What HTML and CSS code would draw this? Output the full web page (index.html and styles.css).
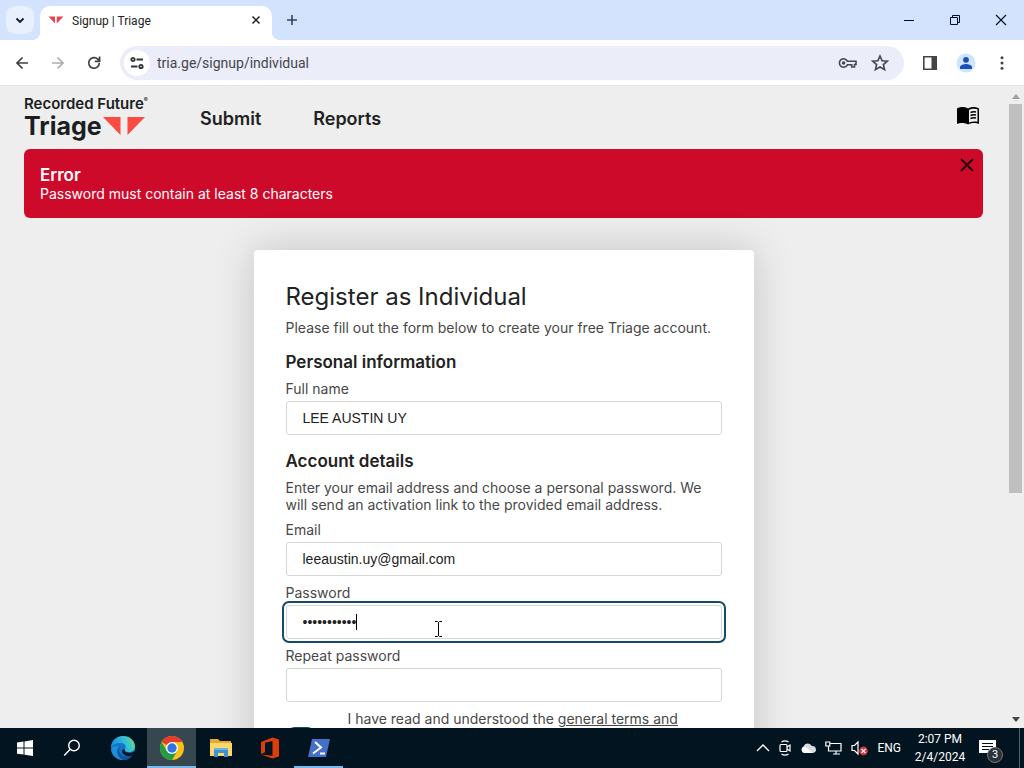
FILE: index.html
```html
<!DOCTYPE html>
<html lang="en">
<head>
<meta charset="utf-8">
<title>Signup | Triage</title>
<link rel="stylesheet" href="styles.css">
</head>
<body>
<div class="tabstrip">
  <button class="tab-search" aria-label="Search tabs"><svg width="12" height="12" viewBox="0 0 12 12"><path d="M2.500 4.500 6 8l3.500-3.500" fill="none" stroke="#111827" stroke-width="1.800"/></svg></button>
  <div class="tab">
    <svg width="16" height="16" viewBox="0 0 16 16"><path d="M.5 3.500h6.500v7zM15.500 3.500H8.700v7z" fill="#e2484d"/></svg>
    <span class="tab-title">Signup | Triage</span>
    <button class="plain" aria-label="Close tab"><svg width="16" height="16" viewBox="0 0 16 16"><path d="m4.500 3.500 7 7m0-7-7 7" stroke="#222" stroke-width="1.500"/></svg></button>
  </div>
  <button class="plain new-tab" aria-label="New tab"><svg width="16" height="16" viewBox="0 0 16 16"><path d="M8 3v10M3 8h10" stroke="#33425e" stroke-width="1.600"/></svg></button>
  <div class="window-controls">
    <button class="plain" aria-label="Minimize"><svg width="12" height="12" viewBox="0 0 12 12"><path d="M1 6.500h10" stroke="#000c30"/></svg></button>
    <button class="plain" aria-label="Restore"><svg width="12" height="12" viewBox="0 0 12 12"><path d="M1.500 3.500h7v7h-7zM3.500 3.500v-2h7v7h-2" fill="none" stroke="#000c30"/></svg></button>
    <button class="plain" aria-label="Close"><svg width="12" height="12" viewBox="0 0 12 12"><path d="m1 1 10 10M11 1 1 11" stroke="#000c30" stroke-width="1.100"/></svg></button>
  </div>
</div>

<div class="toolbar">
  <div class="history">
    <button class="plain" aria-label="Back"><svg width="16" height="16" viewBox="0 0 16 16"><path d="M14 8H3m5.500-5.500L3 8l5.500 5.500" fill="none" stroke="#3f4145" stroke-width="1.700"/></svg></button>
    <button class="plain" aria-label="Forward"><svg width="16" height="16" viewBox="0 0 16 16"><path d="M2 8h11M7.500 2.500 13 8l-5.500 5.500" fill="none" stroke="#aaacaf" stroke-width="1.700"/></svg></button>
    <button class="plain" aria-label="Reload"><svg width="16" height="16" viewBox="0 0 16 16"><path d="M13.300 8A5.300 5.300 0 1 1 11.800 4.200L13.500 6M13.600 1.500V6.300H8.800" fill="none" stroke="#3f4145" stroke-width="1.700"/></svg></button>
  </div>
  <div class="omnibox">
    <button class="site-info" aria-label="View site information"><svg width="16" height="16" viewBox="0 0 16 16" fill="none" stroke="#303236" stroke-width="1.800"><circle cx="4" cy="4.500" r="1.700"/><path d="M7.500 4.500H14M2 11.500h6.500"/><circle cx="12" cy="11.500" r="1.700"/></svg></button>
    <input class="address" type="text" aria-label="Address" value="tria.ge/signup/individual">
    <button class="plain" aria-label="Manage passwords"><svg width="20" height="16" viewBox="0 0 20 16" fill="none" stroke="#45474d" stroke-width="1.600"><path d="M10.400 6.200H19v3.300h-1.500V12h-2.800V9.800h-4.300a4.200 4.200 0 1 1 0-3.600z"/><circle cx="6.600" cy="8" r="1" fill="#45474d"/></svg></button>
    <button class="plain" aria-label="Bookmark"><svg width="18" height="18" viewBox="0 0 18 18"><path d="m9 2 2.100 4.700 5.200.5-3.900 3.400 1.200 5.100L9 13l-4.600 2.700 1.200-5.100-3.900-3.400 5.200-.5z" fill="none" stroke="#45474d" stroke-width="1.600"/></svg></button>
  </div>
  <button class="plain" aria-label="Side panel"><svg width="16" height="16" viewBox="0 0 16 16"><path d="M1.800 1.800h12.400v12.400H1.800z" fill="none" stroke="#444" stroke-width="1.600"/><path d="M9.500 1.500h5v13h-5z" fill="#444"/></svg></button>
  <button class="plain" aria-label="Profile"><svg width="20" height="20" viewBox="0 0 20 20"><circle cx="10" cy="10" r="9.500" fill="#cfe5fd"/><circle cx="10" cy="6.800" r="2.900" fill="#1a50b8"/><path d="M4 16v-2c0-2 4-3 6-3s6 1 6 3v2z" fill="#1a50b8"/></svg></button>
  <button class="plain" aria-label="Menu"><svg width="16" height="16" viewBox="0 0 16 16" fill="#444"><circle cx="8" cy="2.800" r="1.500"/><circle cx="8" cy="8" r="1.500"/><circle cx="8" cy="13.200" r="1.500"/></svg></button>
</div>

<div class="viewport">
  <div class="page">
    <header class="site-header">
      <a class="logo" href="#">
        <span class="logo-top">Recorded Future<span class="reg">®</span></span>
        <span class="logo-bottom">Triage<svg width="42" height="18" viewBox="0 0 42 18"><path d="M0 0h17.500v18zM42 0H24.500v18z" fill="#fb4b43"/></svg></span>
      </a>
      <nav class="nav"><a href="#">Submit</a><a href="#">Reports</a></nav>
      <a class="docs" href="#" aria-label="Documentation"><svg width="24" height="20" viewBox="0 0 24 20"><path d="M1 2.500C4 .5 9 .5 12 2.500c3-2 8-2 11 0V18c-3-1.500-8-1.500-11 .5C9 16.500 4 16.500 1 18z"/><path d="M13 4c2.500-1.600 6-1.600 8.500-.7v12.500c-2.500-.7-6-.4-8.500.7z" fill="#eee"/><path d="M14.500 6.500c1.700-.8 3.700-.9 5.500-.5M14.500 9.500c1.700-.8 3.700-.9 5.500-.5M14.500 12.500c1.700-.8 3.700-.9 5.500-.5" fill="none" stroke="#000" stroke-width="1.400"/></svg></a>
    </header>

    <div class="alert" role="alert">
      <div>
        <div class="alert-title">Error</div>
        <div class="alert-text">Password must contain at least 8 characters</div>
      </div>
      <button class="plain" aria-label="Dismiss"><svg width="16" height="16" viewBox="0 0 16 16"><path d="m2 2 12 12M14 2 2 14" stroke="#1c0508" stroke-width="2"/></svg></button>
    </div>

    <form class="card">
      <h1>Register as Individual</h1>
      <p>Please fill out the form below to create your free Triage account.</p>
      <h2>Personal information</h2>
      <div class="field">
        <label for="name">Full name</label>
        <input id="name" type="text" value="LEE AUSTIN UY">
      </div>
      <h2>Account details</h2>
      <p>Enter your email address and choose a personal password. We will send an activation link to the provided email address.</p>
      <div class="field">
        <label for="email">Email</label>
        <input id="email" type="email" value="leeaustin.uy@gmail.com">
      </div>
      <div class="field">
        <label for="password">Password</label>
        <div class="control">
          <input id="password" class="focused" type="password" value="abcdefghijk">
          <span class="caret"></span>
          <svg class="pointer" width="9" height="16" viewBox="0 0 9 16"><path d="M1 .5h2.500l1 1 1-1H8M4.500 1v14M1 15.500h2.500l1-1 1 1H8" fill="none" stroke="#000"/></svg>
        </div>
      </div>
      <div class="field">
        <label for="repeat">Repeat password</label>
        <input id="repeat" type="password">
      </div>
      <div class="terms">
        <input id="terms" type="checkbox">
        <div><label for="terms">I have read and understood the</label> <a href="#">general terms and</a></div>
      </div>
    </form>
  </div>
  <div class="scrollbar">
    <svg width="8" height="5" viewBox="0 0 8 5"><path d="M0 5 4 0l4 5z" fill="#a0a0a0"/></svg>
    <div class="track"><div class="thumb"></div></div>
    <svg width="8" height="5" viewBox="0 0 8 5"><path d="m0 0 4 5 4-5z" fill="#444"/></svg>
  </div>
</div>

<div class="taskbar">
  <button class="task" aria-label="Start"><svg width="18" height="18" viewBox="0 0 18 18" fill="#fff"><path d="M1 3.500 7.500 2.600v6H1zM8.500 2.400 17 1v7.600H8.500zM1 9.600h6.500v6L1 14.700zM8.500 9.600H17V17l-8.500-1.300z"/></svg></button>
  <button class="task search" aria-label="Search"><svg width="18" height="18" viewBox="0 0 18 18" fill="none" stroke="#fff" stroke-width="1.400"><circle cx="11" cy="6.500" r="5.300"/><path d="m7.200 10.300-6 6.200"/></svg></button>
  <button class="task" aria-label="Microsoft Edge"><svg width="24" height="24" viewBox="0 0 24 24"><defs><linearGradient id="edge" x1="0" y1=".3" x2="1" y2="0"><stop offset="0" stop-color="#1b8fdc"/><stop offset=".55" stop-color="#35c1d8"/><stop offset="1" stop-color="#6fe06a"/></linearGradient></defs><circle cx="12" cy="12" r="12" fill="#1273c8"/><path d="M0 11.500C0 5 5.500 0 12 0c7 0 12 5 12 10.500 0 4-3 5.500-6 5.500-3.500 0-5-1.500-4-3 2-3.500-1-6-4.500-6C5 7 1.500 9 0 11.500z" fill="url(#edge)"/><path d="M8 10.500C4 14 6.500 22 12.500 24 6.500 24.300 1 20 .2 14 1.500 9.500 5.500 9 8 10.500z" fill="#1b8fdc"/><path d="M9.500 10C6 14 9 20.500 15 20.500c3 0 5-.8 7.300-2C20 22 16.500 24 12.500 24 6 22 4.500 13.500 9.500 10z" fill="#12529b"/><path d="M13.800 13.500c-.8 1.700 1.200 3.300 4.700 3.300 2 0 3.500-.5 4.700-1.500L24 18l-2 1.500c-4 1.500-9 .5-10.500-2.500-.8-1.800-.2-3.200 1-4z" fill="#041722"/></svg></button>
  <button class="task active" aria-label="Google Chrome"><svg width="24" height="24" viewBox="0 0 24 24"><circle cx="12" cy="12" r="12" fill="#fbc116"/><path d="M12 12 1.600 6A12 12 0 0 1 22.400 6H12z" fill="#e33b2e"/><path d="M1.600 6A12 12 0 0 0 12 24l5.200-9L12 12l-5.200 3z" fill="#229a47"/><circle cx="12" cy="12" r="6" fill="#fff"/><circle cx="12" cy="12" r="4.700" fill="#2e74e5"/></svg></button>
  <button class="task" aria-label="File Explorer"><svg width="22" height="20" viewBox="0 0 22 20"><path d="M0 1h8l2 2h11v15H0z" fill="#e8a92c"/><path d="M0 5h22v13H0z" fill="#fbd76c"/><path d="M4 10h14v9h-4v-4H8v4H4z" fill="#3f93cf"/><path d="M4 10h14v2H4z" fill="#64b5e8"/></svg></button>
  <button class="task" aria-label="Office"><svg width="20" height="22" viewBox="0 0 20 22"><path d="M1 5 12.500.5 19 2.500v17l-6.500 2L1 17.500l11.500 1.200V4L5 5.800v9.400L1 17z" fill="#dc3e0b"/></svg></button>
  <button class="task running" aria-label="PowerShell"><svg width="24" height="20" viewBox="0 0 24 20"><path d="M5 1h18l-4 18H1z" fill="#4470c8"/><path d="m8 4 6 5.500-8 6M13 15.500h5" fill="none" stroke="#fff" stroke-width="2"/></svg></button>
  <div class="tray">
    <svg width="14" height="8" viewBox="0 0 14 8"><path d="m1 7 6-6 6 6" fill="none" stroke="#fff" stroke-width="1.300"/></svg>
    <svg width="12" height="16" viewBox="0 0 12 16" fill="none" stroke="#fff" stroke-width="1.200"><rect x="1" y="4.500" width="7" height="7" rx="1"/><path d="m8 7 3-2v6L8 9M2.500 2c2-1.400 5-1.400 7 0M2.500 14c2 1.400 5 1.400 7 0"/></svg>
    <svg width="16" height="12" viewBox="0 0 16 12"><path d="M4 11a3.500 3.500 0 0 1-.5-6.500 4.500 4.500 0 0 1 8.300-.5A3.500 3.500 0 0 1 13 11z" fill="#d8dbe0"/><path d="M4 11a3.500 3.500 0 0 1-.8-6c2.500-.5 3.500.5 9 6z" fill="#fff"/></svg>
    <svg width="17" height="14" viewBox="0 0 17 14" fill="none" stroke="#fff" stroke-width="1.200"><path d="M5.500 2.500H16v7.500H3.500V5.500M8 13h7m-4-3v3M.8 1h4v4h-4z"/></svg>
    <svg width="17" height="16" viewBox="0 0 17 16"><path d="M1 5.500h2.500L7 2v12l-3.500-3.500H1z" fill="none" stroke="#fff" stroke-width="1.200"/><circle cx="12.500" cy="11" r="4.400" fill="#d4353d"/><path d="m10.500 9 4 4m0-4-4 4" stroke="#fff" stroke-width="1.100"/></svg>
    <span class="lang">ENG</span>
    <div class="clock"><span>2:07 PM</span><span>2/4/2024</span></div>
    <button class="notify" aria-label="Notifications"><svg width="17" height="18" viewBox="0 0 17 18"><path d="M0 1h17v13h-4v4l-4-4H0z" fill="#fff"/><path d="M3 4.500h11M3 7.500h11M3 10.500h7" stroke="#02101c"/></svg><span class="badge">3</span></button>
    <span class="show-desktop"></span>
  </div>
</div>
</body>
</html>
```

FILE: styles.css
```css
* { box-sizing: border-box; }

body {
  margin: 0;
  height: 100vh;
  display: flex;
  flex-direction: column;
  overflow: hidden;
  background: #fff;
  color: #222;
  font-family: Inter, "Liberation Sans", sans-serif;
  font-size: 14px;
  line-height: 17px;
}

svg { display: block; flex: none; }
a { color: inherit; }
button { font: inherit; color: inherit; cursor: pointer; }

.plain {
  display: flex;
  padding: 0;
  border: 0;
  background: none;
}

/* Browser tabs */
.tabstrip {
  display: flex;
  align-items: center;
  flex: none;
  height: 40px;
  padding: 0 17px 0 6px;
  background: #d3e3fd;
}

.tab-search {
  display: grid;
  place-items: center;
  width: 28px;
  height: 28px;
  padding: 0;
  border: 0;
  border-radius: 9px;
  background: #e8f0fe;
}

.tab {
  position: relative;
  display: flex;
  align-items: center;
  gap: 8px;
  align-self: flex-end;
  width: 232px;
  height: 34px;
  margin-left: 6px;
  padding: 0 8px 5px;
  border-radius: 10px 10px 0 0;
  background: #fff;
}

/* Flared feet that join the tab to the toolbar */
.tab::before,
.tab::after {
  content: "";
  position: absolute;
  bottom: 0;
  width: 8px;
  height: 8px;
}

.tab::before {
  right: 100%;
  background: radial-gradient(circle at 0 0, transparent 8px, #fff 8px);
}

.tab::after {
  left: 100%;
  background: radial-gradient(circle at 100% 0, transparent 8px, #fff 8px);
}

.tab-title {
  flex: 1;
  font: 12px/16px Roboto, sans-serif;
}

.new-tab { margin-left: 12px; }

.window-controls {
  display: flex;
  gap: 34px;
  margin-left: auto;
}

/* Browser toolbar */
.toolbar {
  display: flex;
  align-items: center;
  gap: 18px;
  flex: none;
  height: 46px;
  padding: 0 14px;
  border-bottom: 1px solid #e6e6e6;
}

.history { display: flex; gap: 20px; }

.omnibox {
  display: flex;
  align-items: center;
  gap: 14px;
  flex: 1;
  height: 34px;
  padding: 0 15px 0 4px;
  border-radius: 17px;
  background: #ebedf8;
}

.site-info {
  display: grid;
  place-items: center;
  width: 26px;
  height: 26px;
  padding: 0;
  border: 0;
  border-radius: 50%;
  background: #fff;
}

.address {
  flex: 1;
  min-width: 0;
  margin-left: -7px;
  padding: 0;
  border: 0;
  outline: 0;
  background: none;
  color: #44464c;
  font: 14px/20px Roboto, sans-serif;
}

/* Page */
.viewport {
  display: flex;
  flex: 1;
  min-height: 0;
  overflow: hidden;
  background: #eee;
}

.page { flex: 1; padding: 0 24px; }

.site-header {
  display: flex;
  align-items: center;
  height: 63px;
}

.logo {
  display: flex;
  flex-direction: column;
  width: 128px;
  margin-bottom: 2px;
  color: #1c1e22;
  text-decoration: none;
}

.logo-top {
  display: flex;
  font-size: 15px;
  font-weight: 600;
  line-height: 18px;
  white-space: nowrap;
}

.reg { font-size: 6px; line-height: 10px; }

.logo-bottom {
  display: flex;
  align-items: center;
  gap: 1px;
  font-size: 25px;
  font-weight: 700;
  line-height: 26px;
}

.nav {
  display: flex;
  gap: 52px;
  margin: 2px 0 0 48px;
  font-size: 18px;
  font-weight: 600;
  line-height: 24px;
}

.nav a { text-decoration: none; }
.docs { margin: 0 3px 4px auto; }

.alert {
  display: flex;
  justify-content: space-between;
  align-items: flex-start;
  padding: 16px;
  border-radius: 6px;
  background: #ce0a2b;
  color: #fff;
}

.alert-title {
  font-size: 17px;
  font-weight: 600;
  line-height: 20px;
}

.alert .plain { margin: -8px -8px 0 0; }

.card {
  width: 500px;
  max-width: 100%;
  margin: 32px auto;
  padding: 32px;
  border-radius: 4px;
  background: #fff;
  box-shadow: 0 0 40px rgba(0, 0, 0, 0.18);
}

h1 {
  margin: 0 0 7px;
  font-size: 24px;
  font-weight: 400;
  line-height: 30px;
}

h2 {
  margin: 15px 0 7px;
  font-size: 17px;
  font-weight: 600;
  line-height: 22px;
}

p { margin: 0 0 8px; color: #484848; }

.field {
  display: flex;
  flex-direction: column;
  gap: 4px;
  margin-bottom: 8px;
  color: #484848;
}

.field input {
  width: 100%;
  height: 34px;
  padding: 0 16px;
  border: 1px solid #d6d6d6;
  border-radius: 3px;
  background: #fff;
  color: #222;
  font: 14px/17px "Liberation Sans", Arial, sans-serif;
}

.field .focused {
  outline: 2px solid #154b66;
  outline-offset: 2px;
  display: block;
}

.control { position: relative; }

.caret {
  position: absolute;
  top: 9px;
  left: 70px;
  width: 1px;
  height: 16px;
  background: #000;
}

.pointer { position: absolute; top: 16px; left: 148px; }

.terms {
  display: flex;
  align-items: flex-start;
  gap: 32px;
  color: #484848;
}

.terms input {
  appearance: none;
  flex: none;
  width: 30px;
  height: 18px;
  margin: 17px 0 0;
  border-radius: 9px;
  background: #154b66;
}

.scrollbar {
  display: flex;
  flex-direction: column;
  align-items: center;
  gap: 5px;
  width: 17px;
  padding: 8px 0 6px;
}

.track { flex: 1; width: 13px; }
.thumb { height: 64%; background: #bfbfbf; }

/* Desktop taskbar */
.taskbar {
  display: flex;
  flex: none;
  height: 40px;
  background: #02141f;
  color: #fff;
}

.task {
  display: grid;
  place-items: center;
  width: 49px;
  padding: 0;
  border: 0;
  background: none;
}

.task.search { padding-right: 3px; }
.active { background: #37474f; }
.active, .running { box-shadow: inset 0 -2px #76b9ed; }

.tray {
  display: flex;
  align-items: center;
  gap: 9px;
  margin-left: auto;
  font: 12px/18px Roboto, sans-serif;
}

.clock {
  display: flex;
  flex-direction: column;
  align-items: center;
  width: 60px;
}

.notify {
  position: relative;
  display: flex;
  padding: 0;
  border: 0;
  background: none;
}

.badge {
  position: absolute;
  top: 8px;
  left: 8px;
  width: 16px;
  height: 16px;
  border: 1px solid #777;
  border-radius: 50%;
  background: #29323b;
  color: #fff;
  font-size: 11px;
  line-height: 14px;
}

.show-desktop {
  align-self: stretch;
  width: 5px;
  margin-left: 14px;
  border-left: 1px solid #53606a;
}
```
